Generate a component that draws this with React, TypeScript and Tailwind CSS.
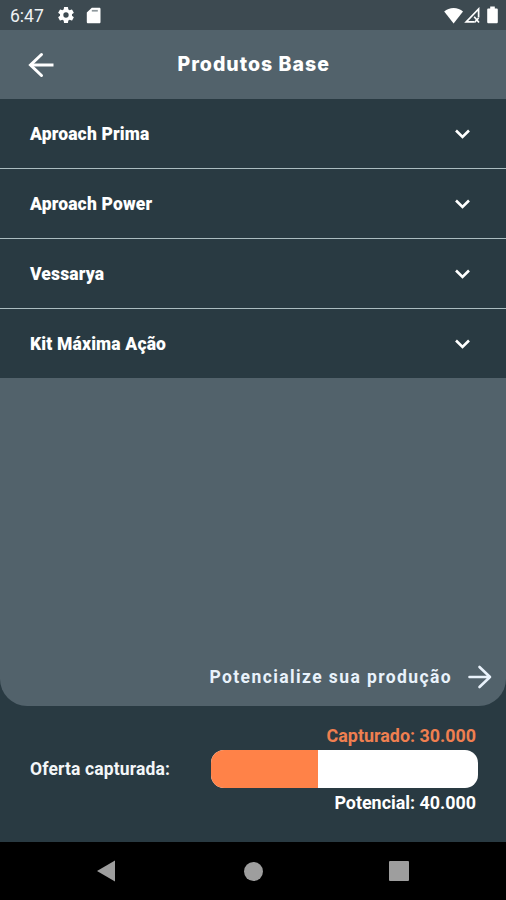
import { useState } from "react";

const products = [
  { id: "prima", label: "Aproach Prima" },
  { id: "power", label: "Aproach Power" },
  { id: "vessarya", label: "Vessarya" },
  { id: "kit", label: "Kit Máxima Ação" },
];

const StatusBar = () => (
  <div className="h-[30px] shrink-0 bg-[#3d4a51] flex items-center text-white">
    <span className="ml-[10px] w-[46px] text-[17.5px] leading-none pt-[3px] text-[#eef2f4]">6:47</span>
    <svg className="w-[20px] h-[20px]" viewBox="0 0 24 24" fill="currentColor">
      <path d="M19.14 12.94c.04-.3.06-.61.06-.94 0-.32-.02-.64-.07-.94l2.03-1.58a.49.49 0 0 0 .12-.61l-1.92-3.32a.488.488 0 0 0-.59-.22l-2.39.96c-.5-.38-1.03-.7-1.62-.94l-.36-2.54a.484.484 0 0 0-.48-.41h-3.84c-.24 0-.43.17-.47.41l-.36 2.54c-.59.24-1.13.57-1.62.94l-2.39-.96c-.22-.08-.47 0-.59.22L2.74 8.87c-.12.21-.08.47.12.61l2.03 1.58c-.05.3-.09.63-.09.94s.02.64.07.94l-2.03 1.58a.49.49 0 0 0-.12.61l1.92 3.32c.12.22.37.29.59.22l2.39-.96c.5.38 1.03.7 1.62.94l.36 2.54c.05.24.24.41.48.41h3.84c.24 0 .44-.17.47-.41l.36-2.54c.59-.24 1.13-.56 1.62-.94l2.39.96c.22.08.47 0 .59-.22l1.92-3.32c.12-.22.07-.47-.12-.61l-2.01-1.58zM12 15.2A3.2 3.2 0 1 1 12 8.8a3.2 3.2 0 0 1 0 6.4z" />
    </svg>
    <svg className="ml-[10px] w-[15px] h-[17px]" viewBox="0 0 15 17" fill="currentColor">
      <path d="M5.8.8h7.4c.8 0 1.3.5 1.3 1.3v12.8c0 .8-.5 1.3-1.3 1.3H2.1c-.8 0-1.3-.5-1.3-1.3V5.6z" />
      <path d="M5.8 2.9h6v1.7h-6z" fill="#8d979c" />
    </svg>
    <svg className="ml-auto w-[20px] h-[17px]" viewBox="0 0 20 17" fill="currentColor">
      <path d="M.2 4.6C2.8 2.4 6 1 9.6 1s7 1.4 9.4 3.6L9.6 16.4z" />
    </svg>
    <svg className="w-[17px] h-[17px]" viewBox="0 0 17 17" fill="none" stroke="currentColor" strokeWidth="1.7">
      <path d="M14.6 10.5V2L2.2 14.8h8" />
      <path d="M10.2 9.8l4.8 5.7M14.6 11l-4.2 4.5" />
    </svg>
    <svg className="ml-[6px] mr-[8px] w-[11px] h-[18px]" viewBox="0 0 11 18" fill="currentColor">
      <path d="M3.2.6h4.6v1.8h1.7c.8 0 1.3.5 1.3 1.2V16c0 .8-.5 1.3-1.3 1.3h-8C.7 17.3.2 16.8.2 16V3.6c0-.7.5-1.2 1.3-1.2h1.7z" />
    </svg>
  </div>
);

const Header = () => (
  <header className="h-[69px] shrink-0 flex items-center text-white">
    <button className="ml-[28px]" aria-label="Voltar">
      <svg
        className="block w-[27px] h-[26px]"
        viewBox="0 0 27 26"
        fill="none"
        stroke="currentColor"
        strokeWidth="3"
        strokeLinecap="round"
      >
        <path d="M13.5 2.5L2.5 13l11 10.5" />
        <path d="M2.5 13h23" strokeLinecap="butt" />
      </svg>
    </button>
    <h1 className="ml-[122.5px] pt-[1px] whitespace-nowrap font-['Inter',sans-serif] text-[19.5px] font-extrabold tracking-[1px]">
      Produtos Base
    </h1>
  </header>
);

const App = () => {
  const [open, setOpen] = useState<string | null>(null);

  return (
    <div className="w-[506px] h-[900px] flex flex-col overflow-hidden bg-[#293a42] font-['Roboto',sans-serif]">
      <StatusBar />
      <main className="h-[676px] shrink-0 flex flex-col bg-[#52626b] rounded-b-[27px]">
        <Header />
        <ul className="bg-[#293a42] divide-y divide-[#abbcc0]">
          {products.map((p) => (
            <li key={p.id}>
              <button
                className="w-full h-[69px] pl-[30px] pr-[36px] flex items-center justify-between text-white"
                aria-expanded={open === p.id}
                onClick={() => setOpen(open === p.id ? null : p.id)}
              >
                <span className="text-[17.5px] font-black tracking-[0.16px] pt-[1px]">{p.label}</span>
                <svg className="w-[15px] h-[10px]" viewBox="0 0 15 10" fill="none" stroke="currentColor" strokeWidth="2.6">
                  <path d="M1 1.5l6.5 6.5L14 1.5" />
                </svg>
              </button>
            </li>
          ))}
        </ul>
        <button className="mt-auto mb-[16px] mr-[14px] flex items-center justify-end text-[#e9f2fb]">
          <span className="text-[17.5px] font-bold tracking-[1.4px]">Potencialize sua produção</span>
          <svg
            className="ml-[15px] w-[25px] h-[24px]"
            viewBox="0 0 25 24"
            fill="none"
            stroke="currentColor"
            strokeWidth="2.6"
            strokeLinecap="round"
            strokeLinejoin="round"
          >
            <path d="M12.5 2L23 12 12.5 22M23 12H2.5" />
          </svg>
        </button>
      </main>

      <footer className="h-[136px] shrink-0 pl-[30px] pr-[28px] flex items-center justify-between text-white">
        <span className="text-[17.5px] font-bold tracking-[0.14px] pb-[10px] text-[#f3f6f8]">Oferta capturada:</span>
        <div className="w-[267px] h-full pt-[17px] flex flex-col">
          <span className="h-[27px] pr-[2px] text-right text-[17.9px] leading-[26px] font-bold text-[#ef7f50]">
            Capturado: 30.000
          </span>
          <div className="h-[38px] rounded-[13px] bg-white overflow-hidden">
            <div className="h-full w-[40%] bg-[#ff8248]" />
          </div>
          <span className="pr-[2px] text-right text-[17.9px] leading-[29px] font-bold">Potencial: 40.000</span>
        </div>
      </footer>

      <nav className="h-[58px] shrink-0 bg-black text-[#9e9e9e] flex items-center pl-[97px]">
        <svg className="w-[18px] h-[22px]" viewBox="0 0 18 22" fill="currentColor">
          <path d="M18 .5v21L0 11z" />
        </svg>
        <div className="ml-[129px] size-[19px] rounded-full bg-[#9e9e9e]" />
        <div className="ml-[126px] size-[20px] rounded-[1px] bg-[#9e9e9e]" />
      </nav>
    </div>
  );
};

export default App;
